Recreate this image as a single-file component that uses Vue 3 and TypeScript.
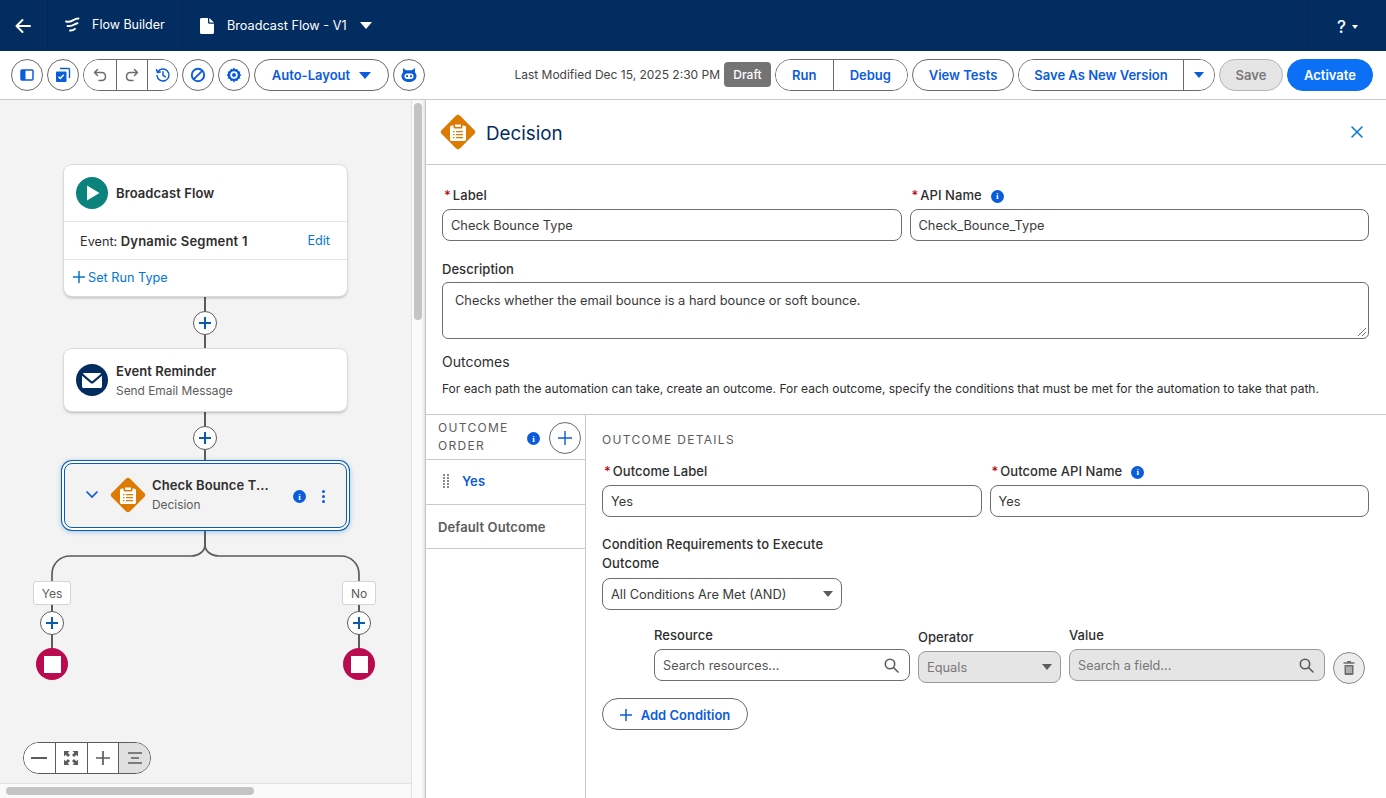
<script setup lang="ts">
interface ToolBtn {
  label: string;
  grey?: boolean;
}

const conditionHeads: string[] = ['Resource', 'Operator', 'Value'];
const edgeLabels: { text: string; side: string }[] = [
  { text: 'Yes', side: 'yes' },
  { text: 'No', side: 'no' },
];
const actions: ToolBtn[] = [{ label: 'View Tests' }];
</script>

<template>
  <div class="app">
    <header class="topbar">
      <div class="top-cell back">
        <svg width="18" height="18" viewBox="0 0 18 18" fill="none" stroke="#fff" stroke-width="2" stroke-linecap="round" stroke-linejoin="round"><path d="M16 9H2.500M8.500 3 2.500 9l6 6" /></svg>
      </div>
      <div class="top-cell app-name">
        <svg width="17" height="17" viewBox="0 0 17 17" fill="none" stroke="#fff" stroke-width="1.900" stroke-linecap="round"><path d="M2 5.500c3 .6 6-.2 7.500-1.400 1.500-1 3.300-1.600 5-1.600M3.500 10c2.800.3 5-.2 6.800-1.500 1-.7 2-1.100 3.200-1.300M6 14.500c2 .1 3.800-.5 5-1.700" /></svg>
        <span>Flow Builder</span>
      </div>
      <div class="top-cell doc">
        <svg width="14" height="16" viewBox="0 0 14 16"><path fill="#fff" d="M2 0h6v4.200c0 .8.700 1.500 1.500 1.500H14V14.500c0 .8-.700 1.500-1.500 1.500h-11C.700 16 0 15.300 0 14.500v-13C0 .700.700 0 1.500 0zM9.300 0 14 4.500H9.800c-.3 0-.5-.2-.5-.5z" /></svg>
        <span>Broadcast Flow - V1</span>
        <i class="tri tri-white"></i>
      </div>
      <div class="top-cell help">
        <span class="q">?</span>
        <i class="tri-mini"></i>
      </div>
    </header>

    <div class="toolbar">
      <button class="circle">
        <svg width="14" height="12" viewBox="0 0 14 12"><rect x="1" y="1" width="12" height="10" rx="1" fill="none" stroke="#0b5cdb" stroke-width="1.500" /><rect x="1" y="1" width="4.500" height="10" fill="#0b5cdb" /></svg>
      </button>
      <button class="circle">
        <svg width="16" height="16" viewBox="0 0 16 16"><path d="M5 1.500h8.500c.6 0 1 .4 1 1V11" fill="none" stroke="#0b5cdb" stroke-width="1.400" /><rect x="1" y="4.500" width="10.500" height="10.500" rx="1" fill="#0b5cdb" /><path d="m3.500 9.700 1.800 1.800 3.500-3.700" fill="none" stroke="#fff" stroke-width="1.400" /></svg>
      </button>
      <div class="pill-group">
        <button class="seg seg-icon">
          <svg width="16" height="16" viewBox="0 0 16 16" fill="none" stroke="#706e6b" stroke-width="1.500" stroke-linecap="round" stroke-linejoin="round"><path d="M5.500 2.500 2.500 5.500l3 3M2.800 5.500h6.700c2.400 0 4 1.700 4 4s-1.600 4-4 4H7" /></svg>
        </button>
        <button class="seg seg-icon">
          <svg width="16" height="16" viewBox="0 0 16 16" fill="none" stroke="#706e6b" stroke-width="1.500" stroke-linecap="round" stroke-linejoin="round"><path d="m10.500 2.500 3 3-3 3M13.200 5.500H6.500c-2.400 0-4 1.700-4 4s1.600 4 4 4H9" /></svg>
        </button>
        <button class="seg seg-icon">
          <svg width="16" height="16" viewBox="0 0 16 16" fill="none" stroke="#0b5cdb" stroke-width="1.500" stroke-linecap="round" stroke-linejoin="round"><path d="M2.700 5.200A6 6 0 1 1 2 8.500M1.500 2.800l1 2.800 2.800-.6M8 4.800v3.600l2.400 1.400" /></svg>
        </button>
      </div>
      <button class="circle">
        <svg width="16" height="16" viewBox="0 0 16 16" fill="none" stroke="#0b5cdb" stroke-width="1.900"><circle cx="8" cy="8" r="6.200" /><path d="m3.800 12.200 8.400-8.400" /></svg>
      </button>
      <button class="circle">
        <svg width="16" height="16" viewBox="0 0 16 16"><path fill="#0b5cdb" fill-rule="evenodd" d="M8 .5l1.300 1.800 2-.3 1 1.900 2 .8-.4 2L15.500 8l-1.600 1.300.4 2-2 .8-1 1.900-2-.3L8 15.500l-1.300-1.800-2 .3-1-1.900-2-.8.4-2L.5 8l1.600-1.300-.4-2 2-.8 1-1.900 2 .3zM8 4.300a3.700 3.700 0 1 0 0 7.400 3.700 3.700 0 0 0 0-7.400z" /><circle cx="8" cy="8" r="2" fill="#0b5cdb" /></svg>
      </button>
      <button class="pill auto-layout">
        <span>Auto-Layout</span>
        <i class="tri tri-blue"></i>
      </button>
      <button class="circle">
        <svg width="18" height="16" viewBox="0 0 18 16"><path fill="#0b5cdb" d="M3 1l3 2.300h6L15 1v4.500c1 1 1.500 2.200 1.500 3.500 0 3.500-3 6-7.500 6S1.500 12.500 1.500 9c0-1.300.5-2.500 1.500-3.500z" /><rect x="4.500" y="6.500" width="9" height="5.500" rx="2.700" fill="#fff" /><circle cx="7" cy="9.200" r="1.100" fill="#0b5cdb" /><circle cx="11" cy="9.200" r="1.100" fill="#0b5cdb" /></svg>
      </button>

      <div class="toolbar-right">
        <span class="modified">Last Modified Dec 15, 2025 2:30 PM</span>
        <span class="draft">Draft</span>
        <div class="pill-group run-group">
          <button class="seg run">Run</button>
          <button class="seg debug">Debug</button>
        </div>
        <button v-for="a in actions" :key="a.label" class="pill view-tests">{{ a.label }}</button>
        <div class="pill-group save-new">
          <button class="seg save-main">Save As New Version</button>
          <button class="seg save-caret"><i class="tri tri-blue"></i></button>
        </div>
        <button class="pill save-off">Save</button>
        <button class="pill activate">Activate</button>
      </div>
    </div>

    <div class="main">
      <section class="canvas">
        <svg class="wires" width="410" height="600" viewBox="0 0 410 600" fill="none" stroke="#5c5c5c" stroke-width="2">
          <path d="M205 196v251" />
          <path stroke-width="1.700" d="M205 445c0 6-6 11-14 11H70c-10 0-18 8-18 18v10" />
          <path stroke-width="1.700" d="M205 445c0 6 6 11 14 11h122c10 0 18 8 18 18v10" />
          <path d="M52 500v50M359 500v50" />
        </svg>

        <div class="node start-node">
          <div class="node-head">
            <span class="round-icon teal">
              <svg width="14" height="16" viewBox="0 0 14 16"><path fill="#fff" d="M1 0.500v15L13.500 8z" /></svg>
            </span>
            <strong>Broadcast Flow</strong>
          </div>
          <div class="node-row event">
            <span>Event: <b>Dynamic Segment 1</b></span>
            <a>Edit</a>
          </div>
          <div class="node-row run-type">
            <svg width="12" height="12" viewBox="0 0 12 12" stroke="#0176d3" stroke-width="1.500"><path d="M6 0v12M0 6h12" /></svg>
            <a>Set Run Type</a>
          </div>
        </div>

        <button class="add add-1"><svg width="14" height="14" viewBox="0 0 14 14" stroke="#0b5cab" stroke-width="2"><path d="M7 1v12M1 7h12" /></svg></button>

        <div class="node email-node">
          <span class="round-icon navy">
            <svg width="20" height="15" viewBox="0 0 20 15"><path fill="#fff" d="M1.700 0h16.600c.5 0 .8.500.4.900L10.600 8c-.3.300-.9.300-1.200 0L1.300.9C.9.500 1.200 0 1.700 0z" /><path fill="#fff" d="M0 2.800 8.500 10c.9.800 2.100.8 3 0L20 2.800v10.700c0 .8-.7 1.500-1.500 1.500h-17C.7 15 0 14.300 0 13.500z" /></svg>
          </span>
          <div class="node-text">
            <strong>Event Reminder</strong>
            <small>Send Email Message</small>
          </div>
        </div>

        <button class="add add-2"><svg width="14" height="14" viewBox="0 0 14 14" stroke="#0b5cab" stroke-width="2"><path d="M7 1v12M1 7h12" /></svg></button>

        <div class="node decision-node">
          <svg class="chev" width="14" height="9" viewBox="0 0 14 9" fill="none" stroke="#0b5cdb" stroke-width="1.700"><path d="m1.500 1.500 5.500 5.500 5.500-5.500" /></svg>
          <span class="diamond small-diamond">
            <svg width="16" height="18" viewBox="0 0 16 18"><path fill="#fff" fill-rule="evenodd" d="M5 1.500h6V3a1 1 0 0 1-1 1H6a1 1 0 0 1-1-1zM3.500 2.500V4c0 .8.700 1.500 1.500 1.500h6c.8 0 1.500-.7 1.500-1.500V2.500h1C15 2.500 16 3.200 16 4.300v12.200c0 .8-.7 1.500-1.500 1.500h-13C.7 18 0 17.300 0 16.500V4.300C0 3.200 1 2.500 2 2.500zM3 8v1.200h1.500V8zm3 0v1.200h7V8zm-3 3v1.200h1.500V11zm3 0v1.200h7V11zm-3 3v1.200h1.500V14zm3 0v1.200h7V14z" /></svg>
          </span>
          <div class="node-text">
            <strong>Check Bounce T...</strong>
            <small>Decision</small>
          </div>
          <span class="info info-node">i</span>
          <span class="dots"><i></i><i></i><i></i></span>
        </div>

        <span v-for="e in edgeLabels" :key="e.text" class="edge" :class="`edge-${e.side}`">{{ e.text }}</span>

        <button class="add add-3"><svg width="14" height="14" viewBox="0 0 14 14" stroke="#0b5cab" stroke-width="2"><path d="M7 1v12M1 7h12" /></svg></button>
        <button class="add add-4"><svg width="14" height="14" viewBox="0 0 14 14" stroke="#0b5cab" stroke-width="2"><path d="M7 1v12M1 7h12" /></svg></button>
        <span class="end end-1"><i></i></span>
        <span class="end end-2"><i></i></span>

        <div class="zoom-bar">
          <button><svg width="16" height="2" viewBox="0 0 16 2"><path d="M0 1h16" stroke="#5c5c5c" stroke-width="2" /></svg></button>
          <button>
            <svg width="16" height="16" viewBox="0 0 16 16" fill="#5c5c5c"><path d="M1 1h5.500L4.800 2.700 7 5 5 7 2.700 4.800 1 6.500zM15 1v5.500l-1.700-1.700L11 7 9 5l2.300-2.300L9.500 1zM1 15V9.500l1.700 1.700L5 9l2 2-2.300 2.300L6.500 15zM15 15H9.500l1.700-1.700L9 11l2-2 2.300 2.300L15 9.500z" /></svg>
          </button>
          <button><svg width="14" height="14" viewBox="0 0 14 14" stroke="#5c5c5c" stroke-width="1.700"><path d="M7 0v14M0 7h14" /></svg></button>
          <button class="active"><svg width="14" height="12" viewBox="0 0 14 12" stroke="#5c5c5c" stroke-width="1.500"><path d="M0 1h14M3 6h8M0 11h14" /></svg></button>
        </div>

        <div class="track-v"><div class="scroll-v"></div></div>
        <div class="canvas-foot"><div class="scroll-h"></div></div>
      </section>

      <section class="panel">
        <div class="panel-head">
          <span class="diamond big-diamond">
            <svg width="16" height="18" viewBox="0 0 16 18"><path fill="#fff" fill-rule="evenodd" d="M5 1.500h6V3a1 1 0 0 1-1 1H6a1 1 0 0 1-1-1zM3.500 2.500V4c0 .8.700 1.500 1.500 1.500h6c.8 0 1.500-.7 1.500-1.500V2.500h1C15 2.500 16 3.200 16 4.300v12.200c0 .8-.7 1.500-1.500 1.500h-13C.7 18 0 17.300 0 16.500V4.300C0 3.200 1 2.500 2 2.500zM3 8v1.200h1.500V8zm3 0v1.200h7V8zm-3 3v1.200h1.500V11zm3 0v1.200h7V11zm-3 3v1.200h1.500V14zm3 0v1.200h7V14z" /></svg>
          </span>
          <h1>Decision</h1>
          <svg class="close" width="12" height="12" viewBox="0 0 12 12" stroke="#0176d3" stroke-width="1.500" stroke-linecap="round"><path d="m1 1 10 10M11 1 1 11" /></svg>
        </div>

        <div class="top-form">
          <div class="two-col">
            <label class="field">
              <span class="lbl"><em>*</em>Label</span>
              <span class="input">Check Bounce Type</span>
            </label>
            <label class="field">
              <span class="lbl"><em>*</em>API Name<span class="info info-lbl">i</span></span>
              <span class="input">Check_Bounce_Type</span>
            </label>
          </div>
          <div class="desc">
            <span class="lbl">Description</span>
            <div class="textarea">
              Checks whether the email bounce is a hard bounce or soft bounce.
              <svg class="grip" width="8" height="8" viewBox="0 0 8 8" stroke="#706e6b" fill="none"><path d="M0 8 8 0M4 8l4-4" /></svg>
            </div>
          </div>
          <h2>Outcomes</h2>
          <p class="help-text">For each path the automation can take, create an outcome. For each outcome, specify the conditions that must be met for the automation to take that path.</p>
        </div>

        <div class="outcomes">
          <aside class="order">
            <div class="order-head">
              <span class="caps">OUTCOME ORDER</span>
              <span class="info info-order">i</span>
              <button class="circle plus-circle"><svg width="14" height="14" viewBox="0 0 14 14" stroke="#0b5cdb" stroke-width="1.400"><path d="M7 0v14M0 7h14" /></svg></button>
            </div>
            <div class="order-row yes">
              <span class="drag"><i v-for="n in 10" :key="n"></i></span>
              <b>Yes</b>
            </div>
            <div class="order-row default"><b>Default Outcome</b></div>
          </aside>

          <div class="details">
            <div class="caps details-title">OUTCOME DETAILS</div>
            <div class="two-col">
              <label class="field">
                <span class="lbl"><em>*</em>Outcome Label</span>
                <span class="input">Yes</span>
              </label>
              <label class="field">
                <span class="lbl"><em>*</em>Outcome API Name<span class="info info-lbl">i</span></span>
                <span class="input">Yes</span>
              </label>
            </div>
            <div class="requirements">
              <span class="lbl req-lbl">Condition Requirements to Execute Outcome</span>
              <div class="select req-select">
                <span>All Conditions Are Met (AND)</span>
                <i class="tri-small"></i>
              </div>
            </div>
            <div class="condition">
              <div class="cond-col cond-res">
                <span class="lbl">{{ conditionHeads[0] }}</span>
                <div class="input search">
                  <span>Search resources...</span>
                  <svg width="15" height="15" viewBox="0 0 15 15" fill="none" stroke="#5c5c5c" stroke-width="1.600" stroke-linecap="round"><circle cx="6" cy="6" r="4.700" /><path d="m9.500 9.500 4.500 4.500" /></svg>
                </div>
              </div>
              <div class="cond-col cond-op">
                <span class="lbl">{{ conditionHeads[1] }}</span>
                <div class="select disabled">
                  <span>Equals</span>
                  <i class="tri-small"></i>
                </div>
              </div>
              <div class="cond-col cond-val">
                <span class="lbl">{{ conditionHeads[2] }}</span>
                <div class="input search disabled">
                  <span>Search a field...</span>
                  <svg width="15" height="15" viewBox="0 0 15 15" fill="none" stroke="#5c5c5c" stroke-width="1.600" stroke-linecap="round"><circle cx="6" cy="6" r="4.700" /><path d="m9.500 9.500 4.500 4.500" /></svg>
                </div>
              </div>
              <button class="circle trash">
                <svg width="12" height="14" viewBox="0 0 12 14"><path fill="#706e6b" d="M4 0h4v1.300h3.500v1.400H.5V1.300H4zM1.500 4h9v8.700c0 .7-.6 1.300-1.300 1.300H2.800c-.7 0-1.300-.6-1.300-1.300zm2 1.500v6.500h1V5.500zm2 0v6.500h1V5.500zm2 0v6.500h1V5.500z" /></svg>
              </button>
            </div>
            <button class="pill add-condition">
              <svg width="12" height="12" viewBox="0 0 12 12" stroke="#0b5cdb" stroke-width="1.500"><path d="M6 0v12M0 6h12" /></svg>
              Add Condition
            </button>
          </div>
        </div>
      </section>
    </div>
  </div>
</template>

<style>
html,
body {
  margin: 0;
  background: #fff;
}
</style>

<style scoped>
* {
  box-sizing: border-box;
}
.app {
  width: 1386px;
  height: 798px;
  overflow: hidden;
  display: flex;
  flex-direction: column;
  font-family: Inter, "Liberation Sans", sans-serif;
  font-size: 13px;
  color: #2e2e2e;
}
button {
  font-family: inherit;
  background: #fff;
  padding: 0;
  cursor: pointer;
}
.topbar {
  height: 51px;
  flex: none;
  display: flex;
  background: #032d60;
  color: #fff;
}
.top-cell {
  display: flex;
  align-items: center;
  height: 100%;
}
.back {
  width: 48px;
  padding-left: 14px;
  border-right: 1px solid #02264f;
}
.app-name {
  width: 135px;
  padding-left: 16px;
  padding-bottom: 2px;
  gap: 11px;
  font-size: 12.500px;
  border-right: 1px solid #02264f;
}
.doc {
  padding-left: 17px;
  font-size: 12.700px;
  gap: 13px;
  flex: 1;
}
.help {
  width: 78px;
  padding-left: 28px;
  padding-top: 3px;
  border-left: 1px solid #02264f;
  gap: 6px;
}
.q {
  font-size: 17px;
  font-weight: 500;
}
.tri-mini {
  border-left: 3px solid transparent;
  border-right: 3px solid transparent;
  border-top: 4px solid #fff;
}
.tri {
  display: inline-block;
  border-left: 6px solid transparent;
  border-right: 6px solid transparent;
  border-top: 7px solid #fff;
}
.tri-blue {
  border-top-color: #0b5cdb;
}
.toolbar {
  height: 49px;
  flex: none;
  display: flex;
  align-items: center;
  gap: 4px;
  padding: 0 13px 1px 11px;
  border-bottom: 1px solid #c9c9c9;
  background: #fff;
}
.circle {
  width: 32px;
  height: 32px;
  flex: none;
  border: 1px solid #6b6b6b;
  border-radius: 50%;
  display: flex;
  align-items: center;
  justify-content: center;
}
.pill-group {
  display: flex;
  height: 32px;
  border: 1px solid #6b6b6b;
  border-radius: 16px;
  overflow: hidden;
  background: #fff;
}
.seg {
  border: 0;
  border-left: 1px solid #6b6b6b;
  height: 100%;
  display: flex;
  align-items: center;
  justify-content: center;
  font-size: 13px;
  font-weight: 600;
  color: #0b5cdb;
  padding-top: 1px;
}
.seg:first-child {
  border-left: 0;
}
.seg-icon {
  width: 31px;
  padding-top: 0;
}
.seg-icon:first-child {
  width: 32px;
}
.seg-icon:last-child {
  width: 30px;
}
.pill {
  height: 32px;
  border: 1px solid #6b6b6b;
  border-radius: 16px;
  font-size: 13px;
  font-weight: 600;
  color: #0b5cdb;
  display: flex;
  align-items: center;
  justify-content: center;
  flex: none;
  padding-top: 1px;
}
.auto-layout {
  width: 135px;
  gap: 9px;
}
.toolbar-right {
  margin-left: auto;
  display: flex;
  align-items: center;
  gap: 4px;
}
.modified {
  font-size: 12px;
  color: #444;
  white-space: nowrap;
}
.draft {
  width: 47px;
  height: 25px;
  background: #747474;
  color: #fff;
  border-radius: 4px;
  font-size: 12px;
  font-weight: 500;
  display: flex;
  align-items: center;
  justify-content: center;
}
.run {
  width: 57px;
}
.debug {
  width: 75px;
}
.run-group {
  width: 133px;
}
.view-tests {
  width: 102px;
}
.save-new {
  width: 197px;
}
.save-main {
  width: 164px;
}
.save-caret {
  width: 31px;
}
.save-caret .tri {
  border-left-width: 5px;
  border-right-width: 5px;
  border-top-width: 6px;
}
.save-off {
  width: 64px;
  background: #e5e5e5;
  color: #7a7a7a;
  border-color: #b5b5b5;
}
.activate {
  width: 86px;
  background: #0b70f5;
  border-color: #0b70f5;
  color: #fff;
}
.main {
  flex: 1;
  display: flex;
  min-height: 0;
}
.canvas {
  position: relative;
  width: 426px;
  flex: none;
  background: #f3f3f3;
  border-right: 1px solid #c9c9c9;
}
.wires {
  position: absolute;
  left: 0;
  top: 0;
}
.node {
  position: absolute;
  left: 64px;
  width: 283px;
  background: #fff;
  border-radius: 8px;
  box-shadow: 0 0 0 1px #dcdcdc, 0 2px 3px rgba(0, 0, 0, 0.25);
}
.start-node {
  top: 65px;
  height: 131px;
}
.node-head {
  height: 57px;
  display: flex;
  align-items: center;
  gap: 8px;
  padding-left: 12px;
  padding-bottom: 1px;
  border-bottom: 1px solid #e5e5e5;
}
.node-head strong,
.node-text strong {
  font-size: 13px;
  font-weight: 600;
  letter-spacing: 0.1px;
  color: #2e2e2e;
}
.round-icon {
  width: 32px;
  height: 32px;
  border-radius: 50%;
  display: flex;
  align-items: center;
  justify-content: center;
  flex: none;
}
.teal {
  background: #0b827c;
  padding-left: 2px;
}
.navy {
  background: #032d60;
}
.node-row {
  display: flex;
  align-items: center;
}
.event {
  height: 38px;
  justify-content: space-between;
  padding: 0 17px 0 16px;
  border-bottom: 1px solid #e5e5e5;
  font-size: 12.700px;
}
.event b {
  font-size: 13px;
  letter-spacing: 0.2px;
  font-weight: 600;
}
a {
  color: #0176d3;
}
.run-type {
  height: 36px;
  padding-left: 9px;
  padding-bottom: 2px;
  gap: 3px;
  font-size: 12.700px;
}
.add {
  position: absolute;
  width: 24px;
  height: 24px;
  border-radius: 50%;
  border: 1px solid #5c5c5c;
  display: flex;
  align-items: center;
  justify-content: center;
}
.add-1 {
  left: 193px;
  top: 211px;
}
.add-2 {
  left: 193px;
  top: 326px;
}
.add-3 {
  left: 40px;
  top: 511px;
}
.add-4 {
  left: 347px;
  top: 511px;
}
.email-node {
  top: 249px;
  height: 62px;
  display: flex;
  align-items: center;
  gap: 8px;
  padding-left: 12px;
}
.node-text {
  display: flex;
  flex-direction: column;
  gap: 4px;
}
.node-text small {
  font-size: 11.900px;
  color: #5c5c5c;
}
.decision-node {
  top: 363px;
  height: 65px;
  display: flex;
  align-items: center;
  padding-left: 20px;
  padding-bottom: 2px;
  background: #f3f3f3;
  border: 1px solid #0b5cab;
  box-shadow: 0 0 0 2px #fff, 0 0 0 3px #0b5cab, 0 1px 5px 3px rgba(1, 118, 211, 0.35);
}
.chev {
  flex: none;
}
.small-diamond {
  margin-left: 11px;
  margin-right: 6px;
}
.diamond {
  width: 36px;
  height: 36px;
  flex: none;
  display: flex;
  align-items: center;
  justify-content: center;
  position: relative;
}
.diamond::before {
  content: "";
  position: absolute;
  inset: 5px;
  background: #dd7a01;
  border-radius: 3px;
  transform: rotate(45deg);
}
.diamond svg {
  position: relative;
}
.info {
  width: 13px;
  height: 13px;
  border-radius: 50%;
  background: #0b5cdb;
  color: #fff;
  font-size: 9px;
  font-weight: 800;
  display: inline-flex;
  align-items: center;
  justify-content: center;
  font-family: "Liberation Serif", serif;
}
.info-node {
  position: absolute;
  left: 228px;
  top: 26px;
}
.dots {
  position: absolute;
  left: 257px;
  top: 26px;
  display: flex;
  flex-direction: column;
  gap: 2px;
}
.dots i {
  width: 3px;
  height: 3px;
  border-radius: 50%;
  background: #0b5cdb;
}
.edge {
  position: absolute;
  top: 481px;
  height: 24px;
  background: #fff;
  border: 1px solid #d4d4d4;
  border-radius: 3px;
  font-size: 12px;
  color: #5c5c5c;
  display: flex;
  align-items: center;
  justify-content: center;
}
.edge-yes {
  left: 33px;
  width: 38px;
}
.edge-no {
  left: 342px;
  width: 34px;
}
.end {
  position: absolute;
  top: 548px;
  width: 32px;
  height: 32px;
  border-radius: 50%;
  background: #ba0a50;
  display: flex;
  align-items: center;
  justify-content: center;
}
.end i {
  width: 17px;
  height: 17px;
  background: #fff;
}
.end-1 {
  left: 36px;
}
.end-2 {
  left: 343px;
}
.zoom-bar {
  position: absolute;
  left: 23px;
  top: 642px;
  width: 128px;
  height: 32px;
  display: flex;
  background: #fff;
  border: 1px solid #5c5c5c;
  border-radius: 16px;
  overflow: hidden;
}
.zoom-bar button {
  flex: 1;
  border: 0;
  border-left: 1px solid #5c5c5c;
  display: flex;
  align-items: center;
  justify-content: center;
}
.zoom-bar button:first-child {
  border-left: 0;
}
.zoom-bar .active {
  background: #e0e0e0;
}
.track-v {
  position: absolute;
  left: 411px;
  top: 0;
  bottom: 0;
  width: 14px;
  background: #fafafa;
  border-left: 1px solid #e2e2e2;
  box-shadow: inset -3px 0 3px -2px rgba(0, 0, 0, 0.14);
}
.scroll-v {
  position: absolute;
  left: 2px;
  top: 3px;
  width: 8px;
  height: 217px;
  background: #c4c4c4;
  border-radius: 4px;
}
.canvas-foot {
  position: absolute;
  left: 0;
  width: 411px;
  top: 683px;
  height: 15px;
  background: #fafafa;
  border-top: 1px solid #e2e2e2;
}
.scroll-h {
  position: absolute;
  left: 6px;
  top: 3px;
  width: 248px;
  height: 8px;
  background: #c4c4c4;
  border-radius: 4px;
}
.panel {
  flex: 1;
  display: flex;
  flex-direction: column;
  min-width: 0;
}
.panel-head {
  height: 65px;
  flex: none;
  display: flex;
  align-items: center;
  padding: 0 23px 0 14px;
  gap: 10px;
  border-bottom: 1px solid #c9c9c9;
}
.panel-head h1 {
  margin: 0;
  padding-top: 2px;
  font-size: 18.800px;
  font-weight: 400;
  color: #032d60;
}
.close {
  margin-left: auto;
}
.top-form {
  padding: 22px 17px 0 16px;
  height: 250px;
  flex: none;
  border-bottom: 1px solid #c9c9c9;
}
.two-col {
  display: grid;
  grid-template-columns: 1fr 1fr;
  gap: 8px;
}
.field {
  display: flex;
  flex-direction: column;
  gap: 6px;
  min-width: 0;
}
.lbl {
  font-size: 13px;
  font-weight: 500;
  letter-spacing: 0.05px;
  line-height: 16px;
  color: #2e2e2e;
  display: block;
}
.lbl em {
  font-style: normal;
  color: #ba0517;
  margin: 0 2px 0 2px;
}
.info-lbl {
  margin-left: 9px;
  vertical-align: 1px;
}
.input {
  height: 32px;
  border: 1px solid #6e6e6e;
  border-radius: 8px;
  display: flex;
  align-items: center;
  padding: 0 8px;
  font-size: 12.800px;
  color: #3a3a3a;
  background: #fff;
}
.desc {
  margin-top: 20px;
}
.textarea {
  position: relative;
  margin-top: 5px;
  height: 57px;
  border: 1px solid #6e6e6e;
  border-radius: 6px;
  padding: 10px 12px;
  font-size: 12.800px;
  color: #3a3a3a;
}
.grip {
  position: absolute;
  right: 2px;
  bottom: 2px;
}
h2 {
  margin: 14px 0 0;
  font-size: 14px;
  font-weight: 400;
  line-height: 18px;
  color: #2e2e2e;
}
.help-text {
  margin: 10px 0 0;
  font-size: 12px;
  line-height: 16px;
  color: #2e2e2e;
  white-space: nowrap;
}
.outcomes {
  flex: 1;
  display: flex;
  min-height: 0;
}
.order {
  width: 160px;
  flex: none;
  border-right: 1px solid #c9c9c9;
}
.order-head {
  position: relative;
  height: 45px;
  border-bottom: 1px solid #c9c9c9;
  padding: 4px 0 0 12px;
}
.caps {
  font-size: 12px;
  letter-spacing: 1.300px;
  line-height: 18px;
  color: #5c5c5c;
}
.order-head .caps {
  display: block;
  width: 90px;
}
.info-order {
  position: absolute;
  left: 101px;
  top: 17px;
}
.plus-circle {
  position: absolute;
  left: 123px;
  top: 7px;
}
.order-row {
  height: 45px;
  display: flex;
  align-items: center;
  border-bottom: 1px solid #c9c9c9;
  font-size: 13px;
  font-weight: 600;
}
.order-row b {
  font-weight: 600;
  letter-spacing: 0.1px;
}
.yes {
  padding-left: 17px;
  gap: 12px;
  color: #0b5cdb;
  padding-bottom: 2px;
}
.default {
  height: 44px;
  padding-left: 12px;
  color: #5c5c5c;
}
.drag {
  width: 7px;
  display: grid;
  grid-template-columns: 2px 2px;
  column-gap: 2px;
  row-gap: 1px;
}
.drag i {
  width: 2px;
  height: 2px;
  background: #8a8a8a;
}
.details {
  flex: 1;
  padding: 16px 17px 0 16px;
  min-width: 0;
}
.details-title {
  margin-bottom: 14px;
}
.requirements {
  margin-top: 18px;
}
.req-lbl {
  width: 240px;
  line-height: 19px;
  letter-spacing: 0.1px;
}
.select {
  height: 32px;
  border: 1px solid #6e6e6e;
  border-radius: 8px;
  display: flex;
  align-items: center;
  justify-content: space-between;
  padding: 0 8px;
  font-size: 12.800px;
  color: #3a3a3a;
  background: #fff;
}
.req-select {
  width: 240px;
  margin-top: 5px;
}
.tri-small {
  border-left: 5.500px solid transparent;
  border-right: 5.500px solid transparent;
  border-top: 6px solid #5c5c5c;
  margin-right: 0;
}
.condition {
  display: flex;
  align-items: flex-start;
  margin: 17px 0 0 52px;
  gap: 8px;
}
.cond-col {
  display: flex;
  flex-direction: column;
  gap: 6px;
}
.cond-res,
.cond-val {
  width: 256px;
}
.cond-op {
  width: 143px;
  padding-top: 2px;
}
.search {
  justify-content: space-between;
  padding-right: 10px;
  font-size: 12.700px;
  color: #555;
}
.disabled {
  background: #e5e5e5;
  border-color: #9a9a9a;
  color: #777;
}
.trash {
  margin-top: 25px;
  background: #ececec;
  border-color: #8a8a8a;
}
.add-condition {
  width: 146px;
  margin-top: 14px;
  gap: 9px;
}
</style>
